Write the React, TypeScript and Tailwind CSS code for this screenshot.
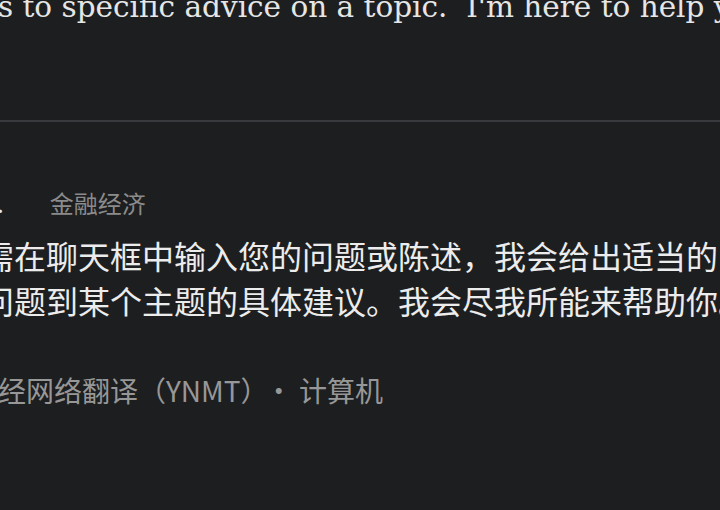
import React from 'react';

const serif = { fontFamily: '"DejaVu Serif", "Liberation Serif", serif' };

// Zero-width box: its text hangs off to the left, so the line starts mid-sentence
const Hang = ({ children }: { children: React.ReactNode }) => (
  <span className="inline-flex w-0 justify-end whitespace-nowrap">{children}</span>
);

export default function App() {
  return (
    <div className="w-[720px] h-[510px] overflow-hidden bg-[#1d1e20] font-['Noto_Sans','Noto_Sans_CJK_SC',sans-serif]">
      {/* English source sentence */}
      <p
        className="-mt-[13px] ml-[-2px] whitespace-pre text-[29.5px] leading-[40px] text-[#e6e6e6]"
        style={serif}
      >
        <Hang>question</Hang>
        {"s to specific advice on a topic.  I'm here to help you."}
      </p>

      <div className="mt-[93px] h-[2px] bg-[#38393c]" />

      {/* tag row */}
      <div className="mt-[63px] flex items-baseline text-[24px] leading-[36px] font-['Noto_Sans_CJK_SC',sans-serif]">
        <span className="-ml-[3px] text-[#e8e8e8]">.</span>
        <span className="ml-[46px] text-[#8b8b8b]">金融经济</span>
      </div>

      {/* translation */}
      <p className="mt-[12px] -ml-[18px] whitespace-nowrap text-[32px] leading-[45px] text-[#ececec] font-['Noto_Sans_CJK_SC',sans-serif]">
        需在聊天框中输入您的问题或陈述，我会给出适当的回答，
        <br />
        问题到某个主题的具体建议。我会尽我所能来帮助你。
      </p>

      {/* source */}
      <p className="mt-[47px] ml-[-2px] whitespace-nowrap text-[28px] leading-[40px] text-[#979797] font-['Noto_Sans_CJK_SC',sans-serif]">
        <Hang>神</Hang>
        经网络翻译（YNMT）<span className="ml-[10px]">·</span> 计算机
      </p>
    </div>
  );
}
